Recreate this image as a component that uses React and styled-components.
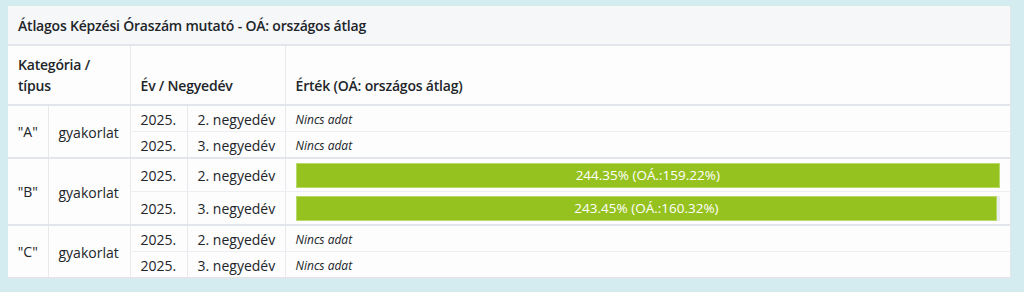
import React from "react";
import styled, { createGlobalStyle } from "styled-components";

const GlobalStyle = createGlobalStyle`
  html, body {
    margin: 0;
    padding: 0;
    background: #d4ebf0;
  }
  body {
    padding: 6px 0 0 8px;
    font-family: "Open Sans", "Liberation Sans", sans-serif;
    color: #212529;
  }
`;

const Card = styled.section`
  width: 1003px;
  background: #fdfdfd;
  border-right: 1px solid #e3e6ea;
  box-sizing: border-box;
`;

const CardHeader = styled.header`
  background: #f6f7f9;
  border-bottom: 2px solid #e2e5e9;
  padding: 9px 10px 8px;
  font-size: 14px;
  line-height: 21px;
  font-weight: 600;
  letter-spacing: -0.2px;
`;

const Table = styled.table`
  width: 100%;
  border-collapse: collapse;
  table-layout: fixed;
  font-size: 14px;
  line-height: 21px;
`;

const Th = styled.th`
  text-align: left;
  vertical-align: bottom;
  font-weight: 600;
  letter-spacing: -0.2px;
  padding: 8px 10px 8px;
  border-left: 1px solid #e7e9ed;
  border-bottom: 2px solid #e2e5e9;
  &:first-child {
    border-left: none;
  }
`;

const Td = styled.td`
  padding: ${(p) => (p.$bar ? "4px 10px 3px" : "2px 10px 1px")};
  height: ${(p) => (p.$bar ? "25px" : "21px")};
  vertical-align: middle;
  text-align: ${(p) => (p.$center ? "center" : "left")};
  border-left: 1px solid #e7e9ed;
  border-bottom: ${(p) => (p.$last ? "2px solid #e2e5e9" : "1px solid #eceef1")};
  white-space: nowrap;
`;

const FirstTd = styled(Td)`
  border-left: none;
  border-right: 1px solid #e7e9ed;
  padding: 2px 8px;
`;

const Empty = styled.span`
  font-style: italic;
  font-size: 12px;
`;

const Track = styled.div`
  height: 25px;
  background: #e9ecef;
  display: flex;
`;

const Fill = styled.div`
  background: #96c21f;
  border: 1px solid #b9d96b;
  box-sizing: border-box;
  color: #fff;
  font-size: 13.5px;
  line-height: 23px;
  text-align: center;
  white-space: nowrap;
`;

const groups = [
  {
    cat: '"A"',
    type: "gyakorlat",
    rows: [
      { year: "2025.", q: "2. negyedév", value: null },
      { year: "2025.", q: "3. negyedév", value: null },
    ],
  },
  {
    cat: '"B"',
    type: "gyakorlat",
    rows: [
      { year: "2025.", q: "2. negyedév", value: 244.35, avg: 159.22 },
      { year: "2025.", q: "3. negyedév", value: 243.45, avg: 160.32 },
    ],
  },
  {
    cat: '"C"',
    type: "gyakorlat",
    rows: [
      { year: "2025.", q: "2. negyedév", value: null },
      { year: "2025.", q: "3. negyedév", value: null },
    ],
  },
];

const max = 244.35;
const fmt = (n) => n.toFixed(2) + "%";

export default function App() {
  return (
    <>
      <GlobalStyle />
      <Card>
        <CardHeader>Átlagos Képzési Óraszám mutató - OÁ: országos átlag</CardHeader>
        <Table>
          <colgroup>
            <col style={{ width: 40 }} />
            <col style={{ width: 82 }} />
            <col style={{ width: 57 }} />
            <col style={{ width: 98 }} />
            <col />
          </colgroup>
          <thead>
            <tr>
              <Th colSpan={2}>Kategória / típus</Th>
              <Th colSpan={2}>Év / Negyedév</Th>
              <Th>Érték (OÁ: országos átlag)</Th>
            </tr>
          </thead>
          <tbody>
            {groups.map((g) =>
              g.rows.map((r, i) => {
                const last = i === g.rows.length - 1;
                const bar = r.value != null;
                return (
                  <tr key={g.cat + i}>
                    {i === 0 && (
                      <>
                        <FirstTd rowSpan={g.rows.length} $last $center>
                          {g.cat}
                        </FirstTd>
                        <Td rowSpan={g.rows.length} $last>
                          {g.type}
                        </Td>
                      </>
                    )}
                    <Td $last={last} $bar={bar}>{r.year}</Td>
                    <Td $last={last} $bar={bar}>{r.q}</Td>
                    <Td $last={last} $bar={bar}>
                      {bar ? (
                        <Track>
                          <Fill style={{ width: (r.value / max) * 100 + "%" }}>
                            {fmt(r.value)} (OÁ.:{fmt(r.avg)})
                          </Fill>
                        </Track>
                      ) : (
                        <Empty>Nincs adat</Empty>
                      )}
                    </Td>
                  </tr>
                );
              })
            )}
          </tbody>
        </Table>
      </Card>
    </>
  );
}
